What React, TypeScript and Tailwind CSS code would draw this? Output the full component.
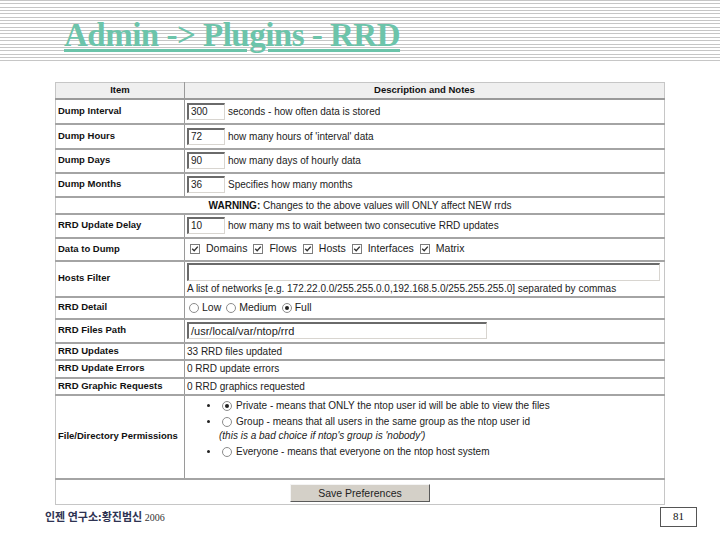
import React from 'react'

const Field = ({ value, className }: { value: string; className: string }) => (
  <span className={`inline-flex items-center bg-white border-t-2 border-l-2 border-r border-b border-t-[#6a6a6a] border-l-[#6a6a6a] border-r-[#d8d5d0] border-b-[#d8d5d0] pl-[2px] text-[10px] leading-none text-[#222] ${className}`}>
    {value}
  </span>
)

const Check = () => (
  <span className="inline-flex w-[10px] h-[10px] border border-[#7c7c7c] bg-white items-center justify-center shrink-0">
    <svg viewBox="0 0 8 8" className="w-[8px] h-[8px]">
      <path d="M1.2 3.8 L3.2 5.8 L6.8 1.6" stroke="#333" strokeWidth="1.4" fill="none" />
    </svg>
  </span>
)

const Radio = ({ on }: { on?: boolean }) => (
  <span className="inline-flex w-[10px] h-[10px] rounded-full border border-[#8c8c8c] bg-white items-center justify-center shrink-0">
    {on && <span className="w-[4px] h-[4px] rounded-full bg-[#222]" />}
  </span>
)

const Row = ({ label, h, children }: { label: string; h: string; children: React.ReactNode }) => (
  <tr className={h}>
    <td className="w-[129px] pl-[2px] font-bold text-[9.5px] text-[#111] border-b-2 border-b-[#a4a4a4] border-r border-r-[#9a9a9a] align-middle">{label}</td>
    <td className="pl-[2px] text-[10px] text-[#222] border-b-2 border-b-[#a4a4a4] align-middle">{children}</td>
  </tr>
)

export default function App() {
  return (
    <div className="w-[720px] h-[540px] bg-white flex flex-col overflow-hidden" style={{ fontFamily: '"Liberation Sans", Arial, sans-serif' }}>
      <div className="h-[64px] pl-[64px] pt-[19px] bg-[repeating-linear-gradient(to_bottom,#c6c6c6_0px,#c6c6c6_1px,#ffffff_1px,#ffffff_3.35px)]">
        <span className="text-[33px] leading-[33px] font-bold tracking-[-0.5px] text-[#6cc4aa] underline decoration-[3px] underline-offset-[3px]" style={{ fontFamily: '"Liberation Serif", "Times New Roman", serif' }}>
          Admin -&gt; Plugins - RRD
        </span>
      </div>

      <div className="pl-[55px] mt-[18px]">
        <table className="w-[610px] border-collapse border border-[#c6c6c6]">
          <tbody>
            <tr className="h-[16px] bg-[#efefef]">
              <td className="w-[129px] text-center font-bold text-[9.5px] text-[#111] border-b-2 border-b-[#9a9a9a] border-r border-r-[#9a9a9a]">Item</td>
              <td className="text-center font-bold text-[9.5px] text-[#111] border-b-2 border-b-[#9a9a9a]">Description and Notes</td>
            </tr>
            <Row label="Dump Interval" h="h-[25px]">
              <div className="flex items-center gap-[3px]"><Field value="300" className="w-[38px] h-[17px]" /><span>seconds - how often data is stored</span></div>
            </Row>
            <Row label="Dump Hours" h="h-[25px]">
              <div className="flex items-center gap-[3px]"><Field value="72" className="w-[38px] h-[17px]" /><span>how many hours of 'interval' data</span></div>
            </Row>
            <Row label="Dump Days" h="h-[24px]">
              <div className="flex items-center gap-[3px]"><Field value="90" className="w-[38px] h-[17px]" /><span>how many days of hourly data</span></div>
            </Row>
            <Row label="Dump Months" h="h-[24px]">
              <div className="flex items-center gap-[3px]"><Field value="36" className="w-[38px] h-[17px]" /><span>Specifies how many months</span></div>
            </Row>
            <tr className="h-[17px]">
              <td colSpan={2} className="text-center text-[10px] text-[#222] border-b-2 border-b-[#a4a4a4]">
                <b className="text-[#111]">WARNING:</b> Changes to the above values will ONLY affect NEW rrds
              </td>
            </tr>
            <Row label="RRD Update Delay" h="h-[24px]">
              <div className="flex items-center gap-[3px]"><Field value="10" className="w-[38px] h-[17px]" /><span>how many ms to wait between two consecutive RRD updates</span></div>
            </Row>
            <Row label="Data to Dump" h="h-[23px]">
              <div className="flex items-center pl-[3px] text-[10.5px]">
                <Check /><span className="ml-[6px] mr-[6px]">Domains</span>
                <Check /><span className="ml-[6px] mr-[6px]">Flows</span>
                <Check /><span className="ml-[6px] mr-[6px]">Hosts</span>
                <Check /><span className="ml-[6px] mr-[6px]">Interfaces</span>
                <Check /><span className="ml-[6px]">Matrix</span>
              </div>
            </Row>
            <Row label="Hosts Filter" h="h-[36px]">
              <div className="flex flex-col gap-[2px]">
                <Field value="" className="w-[473px] h-[18px]" />
                <span className="leading-[12px]">A list of networks [e.g. 172.22.0.0/255.255.0.0,192.168.5.0/255.255.255.0] separated by commas</span>
              </div>
            </Row>
            <Row label="RRD Detail" h="h-[22px]">
              <div className="flex items-center pl-[2px] text-[10.5px]">
                <Radio /><span className="ml-[3px] mr-[5px]">Low</span>
                <Radio /><span className="ml-[3px] mr-[5px]">Medium</span>
                <Radio on /><span className="ml-[3px]">Full</span>
              </div>
            </Row>
            <Row label="RRD Files Path" h="h-[24px]">
              <Field value="/usr/local/var/ntop/rrd" className="w-[300px] h-[17px] text-[11px]" />
            </Row>
            <Row label="RRD Updates" h="h-[16px]">33 RRD files updated</Row>
            <Row label="RRD Update Errors" h="h-[18px]">0 RRD update errors</Row>
            <Row label="RRD Graphic Requests" h="h-[17px]">0 RRD graphics requested</Row>
            <Row label="File/Directory Permissions" h="h-[84px]">
              <ul className="flex flex-col gap-[2px] leading-[14px] pb-[16px]">
                <li className="flex items-center">
                  <span className="w-[3px] h-[3px] rounded-full bg-[#222] ml-[20px] mr-[12px]" />
                  <Radio on /><span className="ml-[4px]">Private - means that ONLY the ntop user id will be able to view the files</span>
                </li>
                <li className="flex flex-col">
                  <div className="flex items-center">
                    <span className="w-[3px] h-[3px] rounded-full bg-[#222] ml-[20px] mr-[12px]" />
                    <Radio /><span className="ml-[4px]">Group - means that all users in the same group as the ntop user id</span>
                  </div>
                  <i className="pl-[32px]">(this is a bad choice if ntop's group is 'nobody')</i>
                </li>
                <li className="flex items-center">
                  <span className="w-[3px] h-[3px] rounded-full bg-[#222] ml-[20px] mr-[12px]" />
                  <Radio /><span className="ml-[4px]">Everyone - means that everyone on the ntop host system</span>
                </li>
              </ul>
            </Row>
            <tr className="h-[23px]">
              <td colSpan={2} className="text-center align-middle">
                <button className="w-[140px] h-[18px] bg-[#d4d0c8] border border-t-[#f4f4f4] border-l-[#f4f4f4] border-r-[#5a5a5a] border-b-[#5a5a5a] text-[10.5px] text-[#222] leading-none">
                  Save Preferences
                </button>
              </td>
            </tr>
          </tbody>
        </table>
      </div>

      <div className="flex items-center justify-between pl-[45px] pr-[23px] mt-[2px]">
        <span className="text-[11px] font-bold text-[#2e3352]" style={{ fontFamily: '"Noto Sans CJK KR", sans-serif' }}>
          인젠 연구소:황진범신 <span className="font-normal text-[10px] text-[#333]" style={{ fontFamily: '"Liberation Serif", serif' }}>2006</span>
        </span>
        <span className="w-[37px] h-[20px] border border-[#555] flex items-center justify-center text-[11px] text-[#111]" style={{ fontFamily: '"Liberation Serif", serif' }}>81</span>
      </div>
    </div>
  )
}
